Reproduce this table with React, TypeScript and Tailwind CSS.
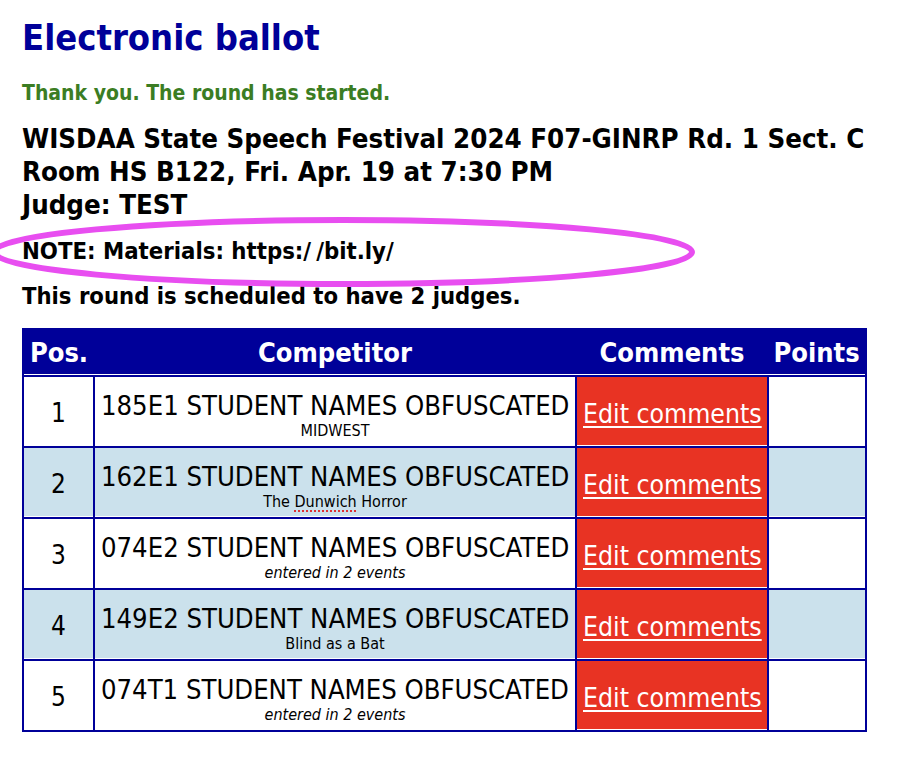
import React from 'react';

type Entry = {
  pos: number;
  code: string;
  sub: string;
  italic?: boolean;
  shaded?: boolean;
};

const entries: Entry[] = [
  { pos: 1, code: '185E1', sub: 'MIDWEST' },
  { pos: 2, code: '162E1', sub: 'The Dunwich Horror', shaded: true },
  { pos: 3, code: '074E2', sub: 'entered in 2 events', italic: true },
  { pos: 4, code: '149E2', sub: 'Blind as a Bat', shaded: true },
  { pos: 5, code: '074T1', sub: 'entered in 2 events', italic: true },
];

const font = { fontFamily: '"DejaVu Sans Condensed", "DejaVu Sans", Verdana, sans-serif' };

const App: React.FC = () => {
  return (
    <div className="relative min-h-[760px] w-[898px] bg-white px-[22px] pt-[16px] text-black" style={font}>
      {/* Page heading */}
      <h1 className="text-[36px] font-bold leading-[44px] text-[#000099]">Electronic ballot</h1>

      <p className="mt-[19px] text-[21px] font-bold leading-[28px] text-[#3b7d23]">
        Thank you. The round has started.
      </p>

      <div className="mt-[15px] text-[27.4px] font-bold leading-[33px]">
        <div>WISDAA State Speech Festival 2024 F07-GINRP Rd. 1 Sect. C</div>
        <div>Room HS B122, Fri. Apr. 19 at 7:30 PM</div>
        <div>Judge: TEST</div>
      </div>

      <p className="mt-[16px] text-[23.7px] font-bold leading-[28px]">
        NOTE: Materials: https:<span className="tracking-[5px]">/</span>/bit.ly/
      </p>
      <p className="mt-[17px] text-[23.6px] font-bold leading-[28px]">This round is scheduled to have 2 judges.</p>

      {/* Ballot table */}
      <table className="mt-[18px] w-[843px] table-fixed border-collapse border-2 border-[#000099]">
        <colgroup>
          <col className="w-[71px]" />
          <col className="w-[482px]" />
          <col className="w-[192px]" />
          <col className="w-[98px]" />
        </colgroup>
        <thead>
          <tr className="h-[47px] bg-[#000099] text-[27px] font-bold text-white">
            <th className="border-b-2 border-[#000099] pt-[2px] shadow-[inset_0_-1px_0_#fff]">Pos.</th>
            <th className="border-b-2 border-[#000099] pt-[2px] shadow-[inset_0_-1px_0_#fff]">Competitor</th>
            <th className="border-b-2 border-[#000099] pt-[2px] shadow-[inset_0_-1px_0_#fff]">Comments</th>
            <th className="border-b-2 border-[#000099] pt-[2px] shadow-[inset_0_-1px_0_#fff]">Points</th>
          </tr>
        </thead>
        <tbody>
          {entries.map((e) => (
            <tr key={e.pos} className={`h-[71px] ${e.shaded ? 'bg-[#cbe1ec]' : 'bg-white'}`}>
              <td className="border-2 border-[#000099] pt-[4px] text-center align-middle text-[26px] shadow-[inset_0_-1px_0_#fff]">
                {e.pos}
              </td>
              <td className="border-2 border-[#000099] px-[6px] pt-[8px] align-middle shadow-[inset_0_-1px_0_#fff]">
                <div className="whitespace-nowrap text-[27.2px] leading-[31px]">
                  {e.code} STUDENT NAMES OBFUSCATED
                </div>
                <div className={`text-center text-[16px] leading-[20px] ${e.italic ? 'italic' : ''}`}>
                  {e.sub === 'The Dunwich Horror' ? (
                    <>
                      The{' '}
                      <span className="underline decoration-[#d33] decoration-dotted decoration-[1.5px] underline-offset-[3px]">
                        Dunwich
                      </span>{' '}
                      Horror
                    </>
                  ) : (
                    e.sub
                  )}
                </div>
              </td>
              <td className="border-2 border-[#000099] bg-[#e83323] px-[6px] pt-[4px] align-middle shadow-[inset_0_-1px_0_#fff]">
                <a href="#" className="whitespace-nowrap text-[26.4px] text-white underline underline-offset-[3px]">
                  Edit comments
                </a>
              </td>
              <td className="border-2 border-[#000099] shadow-[inset_0_-1px_0_#fff]"></td>
            </tr>
          ))}
        </tbody>
      </table>

      {/* Hand-drawn highlight around the note */}
      <svg className="pointer-events-none absolute left-0 top-[212px]" width="700" height="80" viewBox="0 0 700 80">
        <ellipse cx="343" cy="40" rx="349" ry="32" fill="none" stroke="#e84ef0" strokeWidth="6" />
      </svg>
    </div>
  );
};

export default App;
